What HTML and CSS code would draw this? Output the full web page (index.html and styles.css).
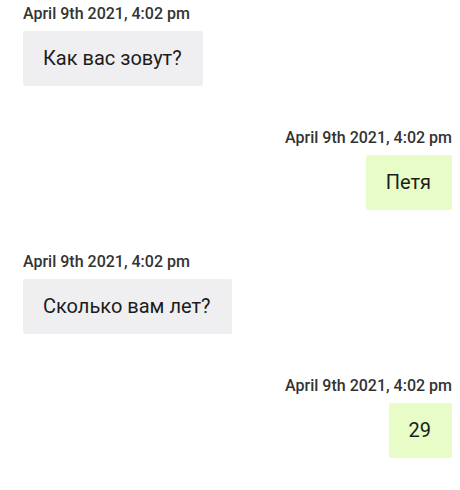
FILE: index.html
```html
<!DOCTYPE html>
<html lang="en">
<head>
    <meta charset="UTF-8">
    <meta name="viewport" content="width=device-width, initial-scale=1.0">
    <title>Chat</title>
    <link rel="stylesheet" href="styles.css">
</head>
<body>
    <div class="chat">
        <div class="message incoming">
            <div class="time">April 9th 2021, 4:02 pm</div>
            <div class="bubble">Как вас зовут?</div>
        </div>
        <div class="message outgoing">
            <div class="time">April 9th 2021, 4:02 pm</div>
            <div class="bubble">Петя</div>
        </div>
        <div class="message incoming">
            <div class="time">April 9th 2021, 4:02 pm</div>
            <div class="bubble">Сколько вам лет?</div>
        </div>
        <div class="message outgoing">
            <div class="time">April 9th 2021, 4:02 pm</div>
            <div class="bubble">29</div>
        </div>
    </div>
</body>
</html>
```

FILE: styles.css
```css
body {
    font-family: Roboto, "Noto Sans", sans-serif;
    background-color: #fff;
    margin: 0;
    color: #1c1c1c;
}
.chat {
    display: flex;
    flex-direction: column;
    gap: 43px;
    padding: 5px 8px 0 23px;
}
.message {
    display: flex;
    flex-direction: column;
}
.incoming {
    align-items: flex-start;
}
.outgoing {
    align-items: flex-end;
}
.time {
    font-size: 16px;
    line-height: 18px;
    font-weight: 500;
    color: #333;
    margin-bottom: 8px;
}
.bubble {
    padding: 16px 21px 16px 20px;
    font-size: 20px;
    line-height: 23px;
    border-radius: 2px;
}
.incoming .bubble {
    background-color: #efeff1;
}
.outgoing .bubble {
    background-color: #e8fcc8;
}
```
